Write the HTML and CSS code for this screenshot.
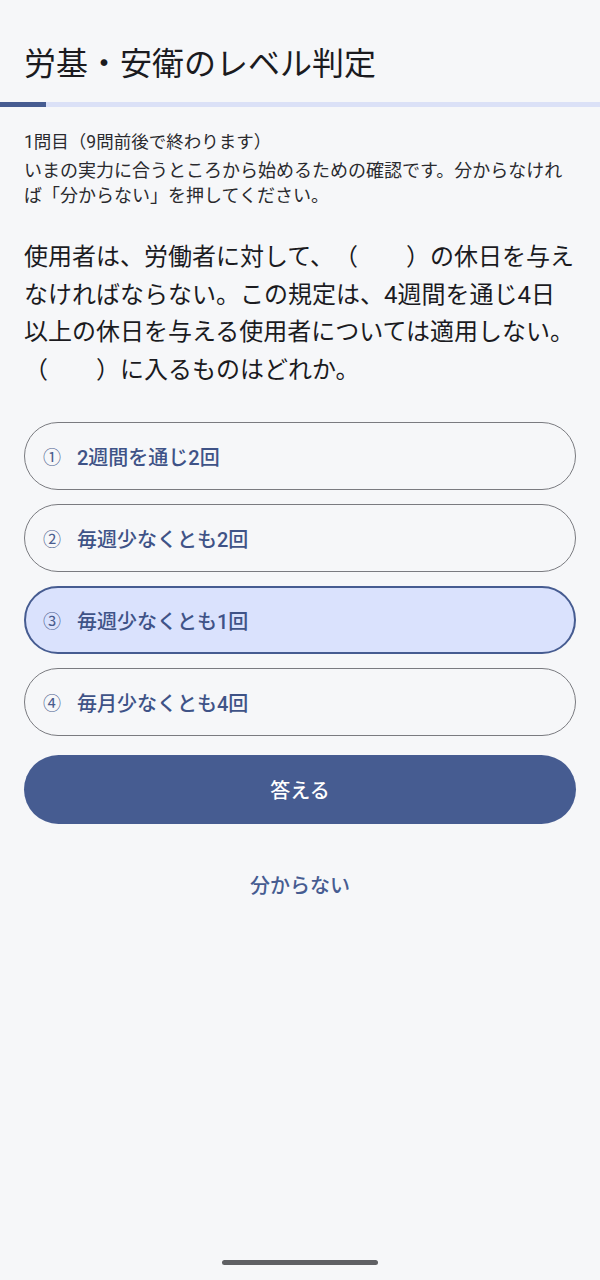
FILE: index.html
```html
<!DOCTYPE html>
<html lang="ja">
<head>
    <meta charset="UTF-8">
    <title>労基・安衛のレベル判定</title>
    <link rel="stylesheet" href="styles.css">
</head>
<body>
    <div class="screen">
        <h1 class="title">労基・安衛のレベル判定</h1>
        <div class="progress"><div class="progress-fill" style="width: 46px"></div></div>

        <div class="content">
            <p class="count">1問目（9問前後で終わります）</p>
            <p class="note">いまの実力に合うところから始めるための確認です。分からなければ「分からない」を押してください。</p>

            <p class="question">使用者は、労働者に対して、（　　）の休日を与えなければならない。この規定は、4週間を通じ4日以上の休日を与える使用者については適用しない。（　　）に入るものはどれか。</p>

            <div class="choices">
                <button class="choice"><span class="num">①</span>2週間を通じ2回</button>
                <button class="choice"><span class="num">②</span>毎週少なくとも2回</button>
                <button class="choice selected"><span class="num">③</span>毎週少なくとも1回</button>
                <button class="choice"><span class="num">④</span>毎月少なくとも4回</button>
            </div>

            <button class="answer">答える</button>
            <button class="skip">分からない</button>
        </div>

        <div class="nav-handle"></div>
    </div>
</body>
</html>
```

FILE: styles.css
```css
body {
    margin: 0;
    background: #f6f7f9;
    font-family: Roboto, "Noto Sans CJK JP", sans-serif;
    color: #1d1d20;
    text-spacing-trim: space-all;
}
.screen {
    min-height: 1280px;
    display: flex;
    flex-direction: column;
}
.title {
    margin: 0;
    padding: 42px 24px 0;
    font-size: 32px;
    font-weight: 400;
    line-height: 44px;
    color: #1b1b1f;
}
.progress {
    margin-top: 16px;
    height: 5px;
    background: #dbe1f7;
}
.progress-fill {
    height: 100%;
    background: #465c91;
}
.content {
    padding: 0 24px;
    display: flex;
    flex-direction: column;
}
.count {
    margin: 22px 0 0;
    font-size: 17.5px;
    line-height: 26px;
    color: #2a2a2e;
}
.note {
    margin: 3px 0 0;
    font-size: 18px;
    line-height: 25px;
    color: #2a2a2e;
}
.question {
    margin: 31px 0 0;
    font-size: 24px;
    line-height: 37.5px;
    color: #1b1b1f;
}
.choices {
    margin-top: 33px;
    display: flex;
    flex-direction: column;
    gap: 14px;
}
.choice {
    height: 68px;
    display: flex;
    align-items: center;
    padding: 0 18px;
    border: 1px solid #7a7b80;
    border-radius: 34px;
    background: transparent;
    font-family: inherit;
    font-size: 20px;
    font-weight: 500;
    color: #3f5387;
    text-align: left;
    cursor: pointer;
}
.choice.selected {
    border: 2px solid #465c91;
    padding: 0 17px;
    background: #dae2fd;
}
.num {
    width: 34px;
    font-size: 18px;
    font-weight: 400;
    color: #4a5d8e;
}
.answer {
    margin-top: 19px;
    height: 69px;
    border: none;
    border-radius: 35px;
    background: #465c91;
    color: #fff;
    font-family: inherit;
    font-size: 20px;
    font-weight: 500;
    cursor: pointer;
}
.skip {
    margin: 36px auto 0;
    height: 48px;
    padding: 0 24px;
    border: none;
    background: transparent;
    color: #465c91;
    font-family: inherit;
    font-size: 20px;
    font-weight: 500;
    cursor: pointer;
}
.nav-handle {
    margin: auto auto 15px;
    width: 156px;
    height: 5px;
    border-radius: 3px;
    background: #5f6064;
}
```
